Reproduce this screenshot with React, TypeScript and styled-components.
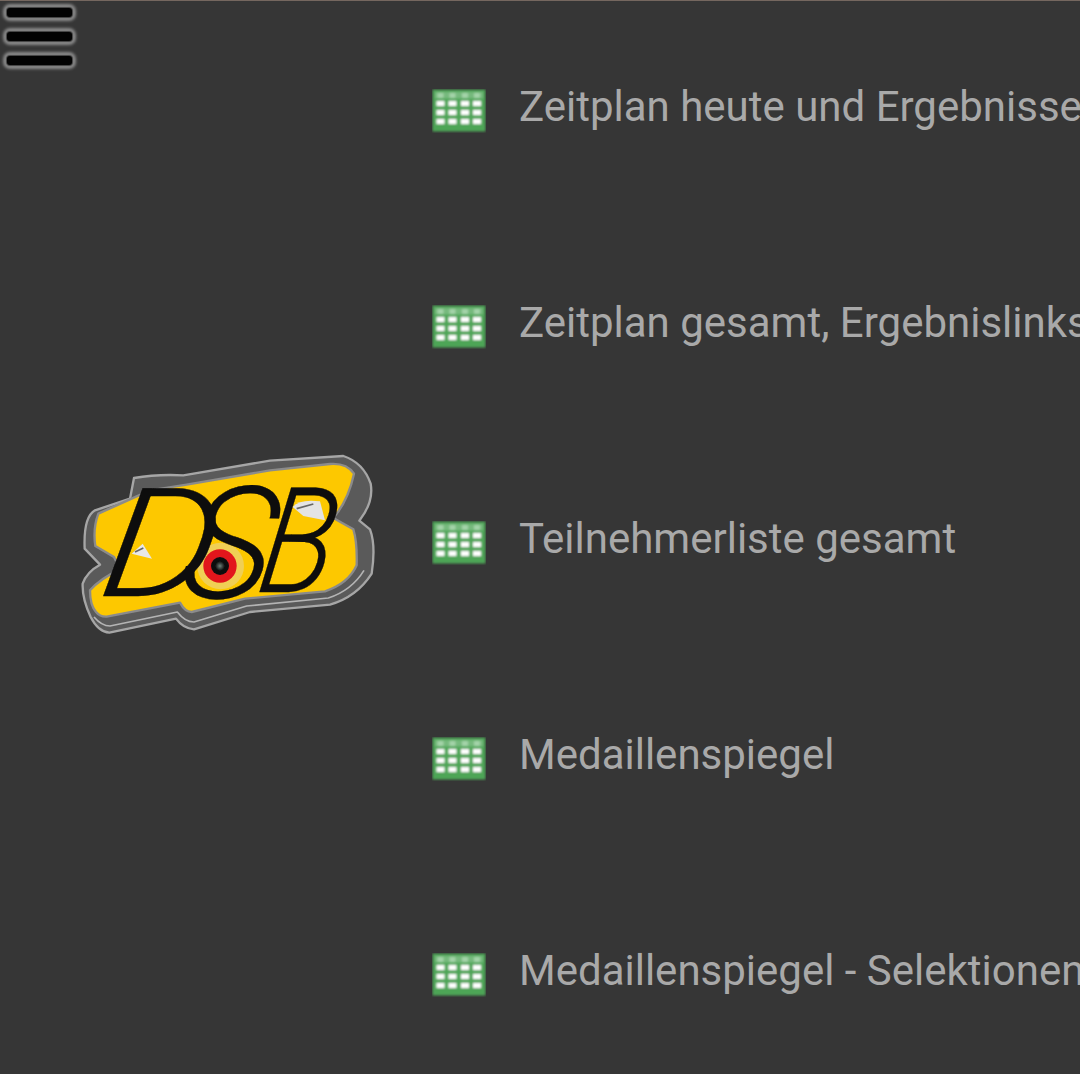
import React from "react";
import styled, { createGlobalStyle } from "styled-components";

const Global = createGlobalStyle`
  html, body { margin: 0; padding: 0; background: #363636; }
`;

const Page = styled.div`
  position: relative;
  box-sizing: border-box;
  width: 1080px;
  height: 1074px;
  overflow: hidden;
  display: grid;
  grid-template-columns: 432px 1fr;
  background: #363636;
  border-top: 1px solid #75675f;
  font-family: Roboto, "Liberation Sans", sans-serif;
`;

const MenuButton = styled.div`
  position: absolute;
  top: 6px;
  left: 7px;
  display: flex;
  flex-direction: column;
  gap: 14px;
`;

const MenuBar = styled.span`
  display: block;
  width: 65px;
  height: 9px;
  margin-top: 1px;
  border-radius: 3px;
  background: #020202;
  box-shadow: 0 0 1px 1px #404040, 0 0 3px 4px #8a8a8a;
`;

const LogoColumn = styled.div`
  display: flex;
  align-items: center;
  padding: 3px 0 0 70px;
`;

const LogoArt = styled.svg`
  display: block;
  width: 320px;
  height: 200px;
`;

const List = styled.ul`
  list-style: none;
  margin: -2px 0 0;
  padding: 0;
  white-space: nowrap;
`;

const Row = styled.li`
  display: flex;
  align-items: center;
  gap: 33px;
  height: 216px;
`;

const GridIconArt = styled.svg`
  flex: none;
  display: block;
  width: 54px;
  height: 44px;
  margin-top: 8px;
`;

const Label = styled.span`
  font-size: 42px;
  line-height: 48px;
  color: #a9a9a9;
`;

const LogoLetter = styled.text`
  font-family: Roboto, "Liberation Sans", sans-serif;
  font-style: italic;
  font-weight: 300;
  fill: #0a0a0a;
  stroke: #0a0a0a;
  stroke-width: 1px;
`;

const items = [
  "Zeitplan heute und Ergebnisse",
  "Zeitplan gesamt, Ergebnislinks",
  "Teilnehmerliste gesamt",
  "Medaillenspiegel",
  "Medaillenspiegel - Selektionen",
];

const GridIcon = () => {
  const xs = [4.5, 16.5, 29, 41];
  const ys = [12, 21, 30];
  return (
    <GridIconArt viewBox="0 0 54 44">
      <defs>
        <filter id="soft" x="-5%" y="-5%" width="110%" height="110%">
          <feGaussianBlur stdDeviation="1" />
        </filter>
      </defs>
      <g filter="url(#soft)">
        <rect x="0.5" y="0.5" width="53" height="42" fill="#4da557" />
        <rect x="3" y="3" width="48" height="6.5" fill="#76b97d" />
        {xs.map((x) =>
          ys.map((y) => (
            <rect key={`${x}-${y}`} x={x} y={y} width="8" height="5" fill="#ffffff" />
          ))
        )}
        {xs.map((x) => (
          <rect key={x} x={x + 1} y="4" width="6" height="5" fill="#a3d3a8" />
        ))}
      </g>
    </GridIconArt>
  );
};

const Logo = () => (
  <LogoArt viewBox="0 0 960 600">
    <defs>
      <filter id="logoSoft">
        <feGaussianBlur stdDeviation="2.2" />
      </filter>
      <radialGradient id="lens" cx="50%" cy="50%" r="50%">
        <stop offset="0%" stopColor="#6f8078" />
        <stop offset="55%" stopColor="#0a0a0a" />
        <stop offset="100%" stopColor="#111" />
      </radialGradient>
    </defs>
    <g filter="url(#logoSoft)" strokeLinejoin="round">
      <path
        d="M38 425 Q36 470 62 525 Q85 570 118 572 L318 530 Q340 560 372 562 L540 510 L780 488 Q860 465 905 395 Q918 310 900 262 L868 236 Q912 180 902 125 Q880 62 820 42 L600 56 L340 100 Q260 96 192 108 L180 170 L75 205 Q40 225 44 320 L90 368 Q50 390 38 425 Z"
        fill="#5a5a5a"
        stroke="#a6a6a6"
        strokeWidth="7"
      />
      <path
        d="M60 445 Q60 490 78 510 Q90 525 110 524 L330 482 Q345 510 365 510 L525 470 L765 448 Q835 425 860 370 Q862 300 850 262 L790 228 Q835 175 852 95 Q830 62 780 66 L600 85 L350 128 L240 145 L85 215 Q68 260 76 312 L132 345 L150 382 Q90 410 60 445 Z"
        fill="#fdc800"
        stroke="#8b8b8b"
        strokeWidth="7"
      />
      <path
        d="M72 525 Q95 552 120 552 L322 510 Q345 540 372 540 L530 492 L775 468 Q845 445 882 385"
        fill="none"
        stroke="#b4b4b4"
        strokeWidth="5"
      />
      <circle cx="452" cy="372" r="70" fill="#f0cf55" />
      <LogoLetter transform="translate(80 462) skewX(-9) scale(1.19 1)" fontSize="455">D</LogoLetter>
      <LogoLetter transform="translate(321 468) skewX(-9)" fontSize="470">S</LogoLetter>
      <LogoLetter transform="translate(555 450) skewX(-9) scale(0.84 1)" fontSize="440">B</LogoLetter>
      <circle cx="450" cy="372" r="50" fill="#e2141c" />
      <circle cx="450" cy="372" r="27" fill="url(#lens)" />
      <path d="M185 335 L218 305 L246 350 Z" fill="#e8e8e8" />
      <path d="M668 195 Q690 170 750 178 L765 235 L700 222 Z" fill="#e4e4e4" />
      <path d="M680 200 L730 186" stroke="#666" strokeWidth="5" />
      <path d="M195 330 L220 318" stroke="#666" strokeWidth="5" />
    </g>
  </LogoArt>
);

export default function App() {
  return (
    <>
      <Global />
      <Page>
        <MenuButton>
          <MenuBar />
          <MenuBar />
          <MenuBar />
        </MenuButton>
        <LogoColumn>
          <Logo />
        </LogoColumn>
        <List>
          {items.map((item) => (
            <Row key={item}>
              <GridIcon />
              <Label>{item}</Label>
            </Row>
          ))}
        </List>
      </Page>
    </>
  );
}
